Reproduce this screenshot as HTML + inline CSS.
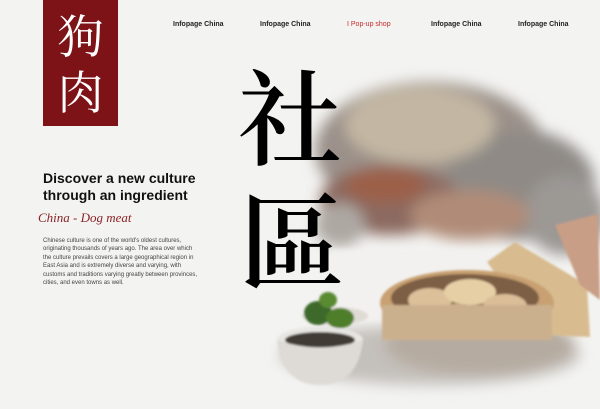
<!DOCTYPE html>
<html><head><meta charset="utf-8"><style>
*{margin:0;padding:0;box-sizing:border-box}
body{width:600px;height:409px;overflow:hidden;background:#f3f3f1;font-family:"Liberation Sans",sans-serif;position:relative}
.logo{position:absolute;left:43px;top:0;width:75px;height:126px;background:#7d1317;color:#fff;font-family:"Noto Serif CJK SC",serif;font-size:46px;line-height:56px;text-align:center;padding-top:6px}
.nav{position:absolute;top:21px;font-size:7px;font-weight:bold;color:#222}
.big{position:absolute;font-family:"Noto Serif CJK SC",serif;font-size:104px;line-height:104px;color:#000;font-weight:600;z-index:3}
h1{position:absolute;left:43px;top:170px;font-size:14px;line-height:16.5px;font-weight:bold;color:#111}
.script{position:absolute;left:38px;top:210px;font-family:"Liberation Serif",serif;font-style:italic;font-size:13px;color:#8a2226}
p{position:absolute;left:43px;top:237px;width:156px;font-size:6px;line-height:8.4px;color:#444}
svg{position:absolute;left:0;top:0}
</style></head><body>
<svg width="600" height="409">
<defs>
<filter id="b" x="-50%" y="-50%" width="200%" height="200%"><feGaussianBlur stdDeviation="7"/></filter>
<filter id="s" x="-50%" y="-50%" width="200%" height="200%"><feGaussianBlur stdDeviation="3"/></filter>
<filter id="t"><feGaussianBlur stdDeviation="1"/></filter>
</defs>
<g filter="url(#b)">
<ellipse cx="430" cy="150" rx="115" ry="68" fill="#9b918a"/>
<ellipse cx="520" cy="185" rx="75" ry="55" fill="#8f8a86"/>
<ellipse cx="565" cy="215" rx="40" ry="40" fill="#9c9894"/>
<ellipse cx="420" cy="125" rx="75" ry="38" fill="#c3b7a3"/>
<ellipse cx="390" cy="200" rx="70" ry="35" fill="#8c6a60"/>
<ellipse cx="385" cy="185" rx="40" ry="18" fill="#9c6048"/>
<ellipse cx="470" cy="215" rx="60" ry="25" fill="#b08c78"/>
<ellipse cx="340" cy="225" rx="25" ry="22" fill="#aea8a3"/>
<ellipse cx="430" cy="355" rx="150" ry="30" fill="#c4c0bb"/>
<ellipse cx="480" cy="345" rx="95" ry="30" fill="#b5aba0"/>
</g>
<rect x="330" y="250" width="200" height="70" fill="#f2f1ef" filter="url(#s)"/>
<g filter="url(#t)">
<path d="M487 262 L515 242 L587 285 L590 337 L540 335 Z" fill="#d8bc90"/>
<path d="M555 225 L598 214 L600 300 L580 285 Z" fill="#c99e86"/>
<ellipse cx="467" cy="303" rx="87" ry="33" fill="#c8a071"/>
<ellipse cx="465" cy="298" rx="74" ry="24" fill="#7d5f44"/>
<ellipse cx="430" cy="300" rx="22" ry="12" fill="#dcc09a"/>
<ellipse cx="470" cy="292" rx="26" ry="13" fill="#e6cfa5"/>
<ellipse cx="505" cy="306" rx="22" ry="12" fill="#dbbd98"/>
<ellipse cx="455" cy="313" rx="20" ry="9" fill="#d8b890"/>
<rect x="382" y="305" width="170" height="35" fill="#cbb08e"/>
<ellipse cx="335" cy="316" rx="33" ry="9" fill="#e0dcd5"/>
<ellipse cx="318" cy="313" rx="14" ry="12" fill="#3e6a2a"/>
<ellipse cx="340" cy="318" rx="14" ry="10" fill="#4f7e2c"/>
<ellipse cx="328" cy="300" rx="9" ry="8" fill="#5a8a32"/>
<ellipse cx="320" cy="340" rx="43" ry="13" fill="#e8e6e2"/>
<ellipse cx="320" cy="340" rx="35" ry="8" fill="#3f3a36"/>
<path d="M277 340 Q282 385 320 385 Q358 385 363 340 Q320 355 277 340 Z" fill="#dedbd6"/>
</g>
</svg>
<div class="logo">狗<br>肉</div>
<div class="nav" style="left:173px">Infopage China</div>
<div class="nav" style="left:260px">Infopage China</div>
<div class="nav" style="left:347px;color:#c92a2f;font-weight:normal">I Pop-up shop</div>
<div class="nav" style="left:431px">Infopage China</div>
<div class="nav" style="left:518px">Infopage China</div>
<div class="big" style="left:238px;top:60px">社</div>
<div class="big" style="left:240px;top:183px">區</div>
<h1>Discover a new culture<br>through an ingredient</h1>
<div class="script">China - Dog meat</div>
<p>Chinese culture is one of the world's oldest cultures, originating thousands of years ago. The area over which the culture prevails covers a large geographical region in East Asia and is extremely diverse and varying, with customs and traditions varying greatly between provinces, cities, and even towns as well.</p>
</body></html>
